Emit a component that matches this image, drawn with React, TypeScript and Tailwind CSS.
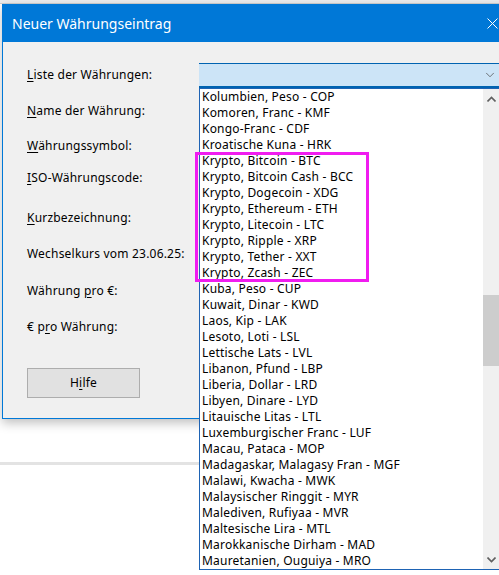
import { ChevronDown } from 'lucide-react'

const LABELS: { pre: string; key: string; post: string; mt: string }[] = [
  { pre: '', key: 'L', post: 'iste der Währungen:', mt: 'mt-[25px]' },
  { pre: '', key: 'N', post: 'ame der Währung:', mt: 'mt-[20px]' },
  { pre: '', key: 'W', post: 'ährungssymbol:', mt: 'mt-[19px]' },
  { pre: '', key: 'I', post: 'SO-Währungscode:', mt: 'mt-[16px]' },
  { pre: '', key: 'K', post: 'urzbezeichnung:', mt: 'mt-[24px]' },
  { pre: 'Wechselkurs vom 23.06.25:', key: '', post: '', mt: 'mt-[20px]' },
  { pre: 'Währung ', key: 'p', post: 'ro €:', mt: 'mt-[21px]' },
  { pre: '€ p', key: 'r', post: 'o Währung:', mt: 'mt-[20px]' },
]

const CURRENCIES = [
  'Kolumbien, Peso - COP',
  'Komoren, Franc - KMF',
  'Kongo-Franc - CDF',
  'Kroatische Kuna - HRK',
  'Krypto, Bitcoin - BTC',
  'Krypto, Bitcoin Cash - BCC',
  'Krypto, Dogecoin - XDG',
  'Krypto, Ethereum - ETH',
  'Krypto, Litecoin - LTC',
  'Krypto, Ripple - XRP',
  'Krypto, Tether - XXT',
  'Krypto, Zcash - ZEC',
  'Kuba, Peso - CUP',
  'Kuwait, Dinar - KWD',
  'Laos, Kip - LAK',
  'Lesoto, Loti - LSL',
  'Lettische Lats - LVL',
  'Libanon, Pfund - LBP',
  'Liberia, Dollar - LRD',
  'Libyen, Dinare - LYD',
  'Litauische Litas - LTL',
  'Luxemburgischer Franc - LUF',
  'Macau, Pataca - MOP',
  'Madagaskar, Malagasy Fran - MGF',
  'Malawi, Kwacha - MWK',
  'Malaysischer Ringgit - MYR',
  'Malediven, Rufiyaa - MVR',
  'Maltesische Lira - MTL',
  'Marokkanische Dirham - MAD',
  'Mauretanien, Ouguiya - MRO',
]

function ScrollArrow({ up }: { up?: boolean }) {
  return (
    <svg width="9" height="6" viewBox="0 0 9 6" className="block">
      <path
        d={up ? 'M0.5 5.5 L4.5 1.5 L8.5 5.5' : 'M0.5 0.5 L4.5 4.5 L8.5 0.5'}
        fill="none"
        stroke="#606060"
        strokeWidth="1.6"
      />
    </svg>
  )
}

function CurrencyDropdown() {
  return (
    <div className="absolute left-[199px] top-[88px] flex h-[482px] w-[302px] border border-[#1e63b4] bg-white">
      <ul className="flex-1">
        {CURRENCIES.map((c) => (
          <li key={c} className="h-4 whitespace-nowrap pl-[2px] leading-4 text-black">
            {c}
          </li>
        ))}
      </ul>
      <div className="flex w-[17px] flex-col bg-[#f0f0f0]">
        <div className="flex h-[17px] items-center justify-center pt-[2px]">
          <ScrollArrow up />
        </div>
        <div className="h-[189px]" />
        <div className="h-[71px] bg-[#cdcdcd]" />
        <div className="flex-1" />
        <div className="flex h-[17px] items-center justify-center pb-[2px]">
          <ScrollArrow />
        </div>
      </div>
    </div>
  )
}

export default function App() {
  return (
    <div
      className="relative h-[575px] w-[499px] overflow-hidden bg-white text-[12px] tracking-[0.2px] text-black"
      style={{ fontFamily: '"Noto Sans", "Liberation Sans", sans-serif' }}
    >
      {/* window behind the dialog */}
      <div className="h-[4px] border-b border-[#cfcfcf] bg-[#ececec]" />
      <div className="h-[458px]" />
      <div className="h-[3px] w-[200px] bg-[#e3e3e3]" />

      {/* dialog */}
      <div className="absolute left-[2px] top-[4px] flex h-[415px] w-[560px] flex-col border border-[#0078d7] bg-[#f0f0f0] shadow-[0_4px_10px_rgba(0,0,0,0.25)]">
        <div className="flex h-[37px] items-center justify-between bg-[#0078d7] pl-[9px] pr-[70px]">
          <span className="text-[14px] tracking-normal text-white">Neuer Währungseintrag</span>
          <svg width="11" height="11" viewBox="0 0 11 11" className="mr-[-7px]">
            <path d="M0.5 0.5 L10.5 10.5 M10.5 0.5 L0.5 10.5" stroke="white" strokeWidth="1" />
          </svg>
        </div>
        <div className="flex flex-col pl-[24px]">
          {LABELS.map((l, i) => (
            <div key={i} className={`${l.mt} h-4 leading-4`}>
              {l.pre}
              {l.key && <u className="underline-offset-2">{l.key}</u>}
              {l.post}
            </div>
          ))}
          <button className="mt-[33px] h-[30px] w-[113px] border border-[#adadad] bg-[#e1e1e1] text-[12px]">
            H<u className="underline-offset-2">i</u>lfe
          </button>
        </div>
      </div>

      {/* combobox */}
      <div className="absolute left-[199px] top-[63px] flex h-[25px] w-[302px] items-center justify-end border-x-0 border-t border-b-2 border-[#0063b1] bg-[#cce4f7] pr-[4px]">
        <ChevronDown size={14} strokeWidth={1.2} color="#444" />
      </div>

      <CurrencyDropdown />

      {/* annotation */}
      <div className="absolute left-[195px] top-[152px] h-[130px] w-[174px] border-[3px] border-[#f01cf0]" />
    </div>
  )
}
